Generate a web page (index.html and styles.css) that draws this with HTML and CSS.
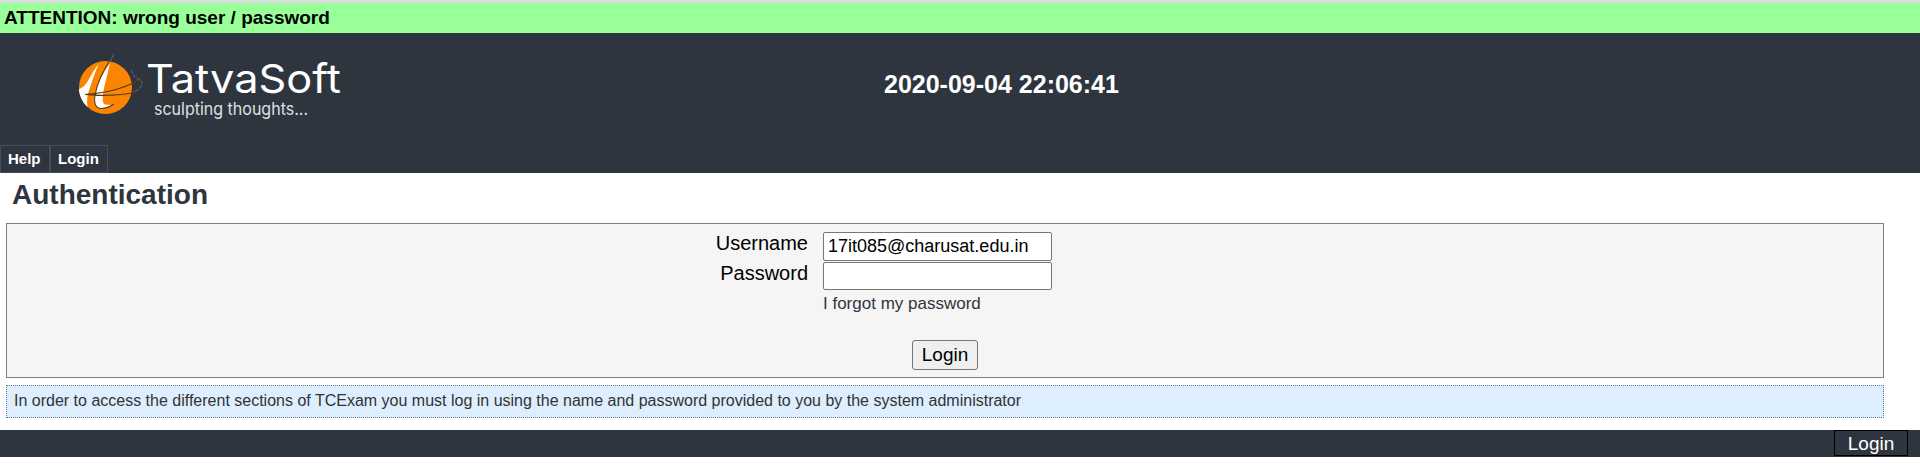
FILE: index.html
```html
<!DOCTYPE html>
<html lang="en">
<head>
<meta charset="utf-8">
<title>Authentication</title>
<link rel="stylesheet" href="styles.css">
</head>
<body>
<div class="message">ATTENTION: wrong user / password</div>
<header class="header">
  <div class="banner">
    <svg class="logo" viewBox="70 45 280 80" role="img" aria-label="TatvaSoft">
      <circle cx="105.500" cy="87.500" r="26.500" fill="#fb8500"/>
      <path d="M98.500 64Q93 78 89.500 89Q86 97 87.500 107Q82 102 80 95Q79 92 79 89Q85 87 89 79Q93 71 98.500 64Z" fill="#fff"/>
      <path d="M110 63Q107 76 104 88Q101 103 105 104.500L111 105Q107 109 100 108Q93 107 95 94Q99 78 110 63Z" fill="#fff"/>
      <path d="M112 57Q98 78 95 95Q93 108 101 108.500Q109 108 114 104M85 94.500Q121 92 142 78M85 94.500Q114 97 137 92" fill="none" stroke="#5a3d18" stroke-width="1.100"/>
      <path d="M110 62L114 54M131 70L134 76L142 82Q143 88 133 92" fill="none" stroke="#5c6064" stroke-width="1.100" stroke-dasharray="4 1"/>
      <text class="logo-name" x="146" y="92.500" textLength="195" lengthAdjust="spacingAndGlyphs">TatvaSoft</text>
      <text class="logo-tag" x="154" y="115" textLength="154" lengthAdjust="spacingAndGlyphs">sculpting thoughts...</text>
    </svg>
    <div class="clock">2020-09-04 22:06:41</div>
  </div>
  <nav class="tabs"><a class="tab tab-help">Help</a><a class="tab tab-login">Login</a></nav>
</header>
<main class="body">
  <h1 class="title">Authentication</h1>
  <form class="login-form">
    <div class="row"><label class="label" for="user">Username</label><input class="field" id="user" type="text" value="17it085@charusat.edu.in"></div>
    <div class="row row-second"><label class="label" for="pass">Password</label><input class="field field-pass" id="pass" type="password"></div>
    <a class="forgot">I forgot my password</a>
    <button class="submit" type="button">Login</button>
  </form>
  <p class="hint">In order to access the different sections of TCExam you must log in using the name and password provided to you by the system administrator</p>
</main>
<footer class="footer"><a class="footer-login">Login</a></footer>
</body>
</html>
```
FILE: styles.css
```css
* { box-sizing: border-box; }
body {
  margin: 0;
  background: #fff;
  color: #000;
  font-family: "Liberation Sans", Arial, sans-serif;
}
.message {
  height: 33px;
  padding-left: 4px;
  border-top: 3px solid #dadce0;
  background: #99ff99;
  font-size: 19px;
  font-weight: bold;
  line-height: 29px;
}
.header {
  display: flex;
  flex-direction: column;
  justify-content: space-between;
  height: 140px;
  background: #2e353f;
  color: #fff;
}
.banner {
  display: grid;
  grid-template-columns: 350px 1fr;
  padding-top: 12px;
}
.logo { width: 280px; height: 80px; margin-left: 70px; }
.logo-name { font: 400 40px Inter, sans-serif; fill: #fff; }
.logo-tag { font: 400 17px Inter, sans-serif; fill: #dfe1e3; }
.clock {
  padding: 25px 0 0 534px;
  font-size: 25px;
  font-weight: bold;
  line-height: 28px;
}
.tabs { display: flex; }
.tab {
  height: 28px;
  border: 1px solid #474e59;
  padding-left: 7px;
  font-size: 15px;
  font-weight: bold;
  line-height: 26px;
}
.tab-help { width: 50px; }
.tab-login { width: 58px; }
.body { height: 257px; padding: 0 36px 0 6px; }
.title {
  margin: 0;
  height: 50px;
  padding-left: 6px;
  color: #2e353f;
  font-size: 28px;
  line-height: 43px;
}
.login-form {
  display: flex;
  flex-direction: column;
  align-items: flex-start;
  height: 155px;
  padding: 8px 0 0;
  border: 1px solid #808080;
  background: #f5f5f5;
}
.row { display: flex; height: 29px; }
.row-second { margin-top: 1px; }
.label {
  width: 801px;
  margin-right: 15px;
  font-size: 20px;
  line-height: 22px;
  text-align: right;
}
.field {
  width: 229px;
  height: 29px;
  padding: 1px 4px;
  border: 1px solid #767676;
  border-radius: 2px;
  background: #fff;
  color: #000;
  font: 18px "Liberation Sans", Arial, sans-serif;
}
.field-pass { height: 28px; }
.forgot {
  margin: 2px 0 0 816px;
  color: #2e353f;
  font-size: 17px;
  line-height: 22px;
}
.submit {
  width: 66px;
  height: 30px;
  margin: 25px 0 0 905px;
  padding: 0;
  border: 1px solid #767676;
  border-radius: 3px;
  background: #efefef;
  color: #000;
  font: 19px "Liberation Sans", Arial, sans-serif;
}
.hint {
  height: 33px;
  margin: 7px 0 0;
  padding-left: 7px;
  border: 1px dotted #667788;
  background: #ddeeff;
  color: #333;
  font-size: 16px;
  line-height: 30px;
}
.footer {
  display: flex;
  justify-content: flex-end;
  height: 27px;
  padding-right: 12px;
  background: #2e353f;
}
.footer-login {
  width: 74px;
  height: 26px;
  border: 1px solid #000;
  color: #fff;
  font-size: 19px;
  line-height: 25px;
  text-align: center;
}
```
